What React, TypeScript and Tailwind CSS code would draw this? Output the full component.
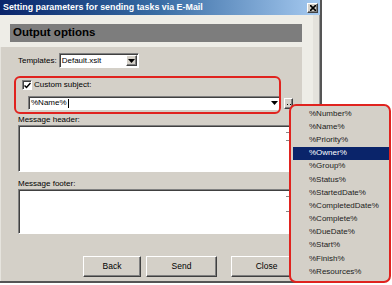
import React from "react";

const tags = [
  "%Number%",
  "%Name%",
  "%Priority%",
  "%Owner%",
  "%Group%",
  "%Status%",
  "%StartedDate%",
  "%CompletedDate%",
  "%Complete%",
  "%DueDate%",
  "%Start%",
  "%Finish%",
  "%Resources%",
];

const sunken =
  "border border-t-[#808080] border-l-[#808080] border-b-white border-r-white shadow-[inset_1px_1px_0_#404040]";
const raised =
  "border border-t-white border-l-white border-b-[#404040] border-r-[#404040] shadow-[inset_-1px_-1px_0_#808080] bg-[#d4d0c8]";

const Arrow = () => (
  <svg width="7" height="4" viewBox="0 0 7 4">
    <path d="M0 0h7L3.5 4z" fill="#000" />
  </svg>
);

const Button = ({ label }: { label: string }) => (
  <div className={`${raised} w-[71px] h-[21px] flex items-center justify-center text-[8.5px] text-black`}>
    {label}
  </div>
);

const App = () => {
  return (
    <div
      className="relative w-[392px] h-[285px] bg-white overflow-hidden"
      style={{ fontFamily: '"Liberation Sans", Arial, sans-serif' }}
    >
      {/* dialog window */}
      <div className="w-[322px] h-[283px] flex flex-col bg-[#d4d0c8] border-r-2 border-b-2 border-[#555]">
        {/* title bar */}
        <div className="h-[15px] flex items-center justify-between pl-[3px] pr-[2px] bg-gradient-to-r from-[#0a246a] via-[#3a6ea5] to-[#a6caf0]">
          <span className="text-white font-bold text-[8.9px] leading-none">
            Setting parameters for sending tasks via E-Mail
          </span>
          <div className={`${raised} w-[11px] h-[10px] flex items-center justify-center`}>
            <svg width="6" height="6" viewBox="0 0 6 6">
              <path d="M0 0L6 6M6 0L0 6" stroke="#000" strokeWidth="1.6" />
            </svg>
          </div>
        </div>

        {/* body */}
        <div className="flex-1 flex">
          <div className="w-[10px] flex flex-col">
            <div className="h-[32px] bg-[#eeede7]" />
            <div className="flex-1 bg-[#d4d0c8] border-l border-[#e6e4de]" />
          </div>

          <div className="w-[292px] flex flex-col">
            <div className="h-[9px] bg-[#eeede7]" />
            <div className="h-[18px] bg-[#7d7d7d] flex items-center pl-[3px]">
              <span className="font-bold text-[11.5px] text-black leading-none">Output options</span>
            </div>
            <div className="h-[5px] bg-[#eeede7]" />

            {/* content */}
            <div className="flex-1 flex flex-col text-[8px] text-black">
              <div className="flex items-center mt-[6px] pl-[8px] gap-[2px]">
                <span>Templates:</span>
                <div className={`${sunken} bg-white w-[80px] h-[15px] flex items-center justify-between pl-[2px] pr-[1px]`}>
                  <span>Default.xslt</span>
                  <div className={`${raised} w-[11px] h-[11px] flex items-center justify-center`}>
                    <Arrow />
                  </div>
                </div>
              </div>

              <div className="flex items-center mt-[12px] pl-[12px] gap-[2px] h-[10px]">
                <div className={`${sunken} bg-white w-[10px] h-[10px] flex items-center justify-center`}>
                  <svg width="7" height="7" viewBox="0 0 7 7">
                    <path d="M0.5 3.5L2.5 5.5L6.5 1" stroke="#000" strokeWidth="1.5" fill="none" />
                  </svg>
                </div>
                <span>Custom subject:</span>
              </div>

              <div className="flex items-center mt-[6px] pl-[18px] gap-[3px]">
                <div className={`${sunken} bg-white w-[253px] h-[14px] flex items-center justify-between pl-[2px] pr-[1px]`}>
                  <span className="flex items-center">
                    %Name%<span className="w-px h-[9px] bg-black ml-px" />
                  </span>
                  <div className="w-[9px] h-[10px] flex items-center justify-center">
                    <Arrow />
                  </div>
                </div>
                <div className={`${raised} w-[9px] h-[11px] flex items-end justify-center gap-[2px] pb-[3px]`}>
                  <span className="w-px h-px bg-black" />
                  <span className="w-px h-px bg-black" />
                </div>
              </div>

              <div className="mt-[5px] pl-[8px] leading-[10px]">Message header:</div>
              <div className={`${sunken} bg-white ml-[8px] w-[274px] h-[47px] flex justify-end`}>
                <div className="w-[7px] flex flex-col items-center pt-[6px] gap-[7px]">
                  <div className="w-[4px] h-px bg-[#888]" />
                  <div className="w-[4px] h-px bg-[#888]" />
                </div>
              </div>

              <div className="mt-[7px] pl-[8px] leading-[10px]">Message footer:</div>
              <div className={`${sunken} bg-white ml-[8px] w-[274px] h-[45px] flex justify-end`}>
                <div className="w-[7px] flex flex-col items-center pt-[6px] gap-[14px]">
                  <div className="w-[4px] h-px bg-[#888]" />
                  <div className="w-[4px] h-px bg-[#888]" />
                </div>
              </div>

              <div className="flex mt-[22px] pl-[73px]">
                <Button label="Back" />
                <div className="ml-[5px]">
                  <Button label="Send" />
                </div>
                <div className="ml-[14px]">
                  <Button label="Close" />
                </div>
              </div>
            </div>
          </div>

          <div className="w-[18px] flex">
            <div className="w-[11px] bg-[#eeede7]" />
            <div className="w-[7px] bg-[#e4e2dc] border-r border-[#999]" />
          </div>
        </div>
      </div>

      {/* red annotation around custom subject */}
      <div className="absolute left-[14px] top-[76px] w-[267px] h-[38px] rounded-[6px] border-2 border-[#e0231f]" />

      {/* tag popup */}
      <div className="absolute left-[289px] top-[104px] w-[102px] h-[179px] rounded-[7px] border-2 border-[#e0231f] bg-[#d4d0c8] overflow-hidden">
        <div className="flex flex-col pt-[1px] pl-[2px] text-[8px] text-[#222]">
          {tags.map((t) => (
            <div
              key={t}
              className={`h-[13.2px] flex items-center pl-[16px] ${
                t === "%Owner%" ? "bg-[#0a246a] text-white" : ""
              }`}
            >
              {t}
            </div>
          ))}
        </div>
      </div>
    </div>
  );
};

export default App;
